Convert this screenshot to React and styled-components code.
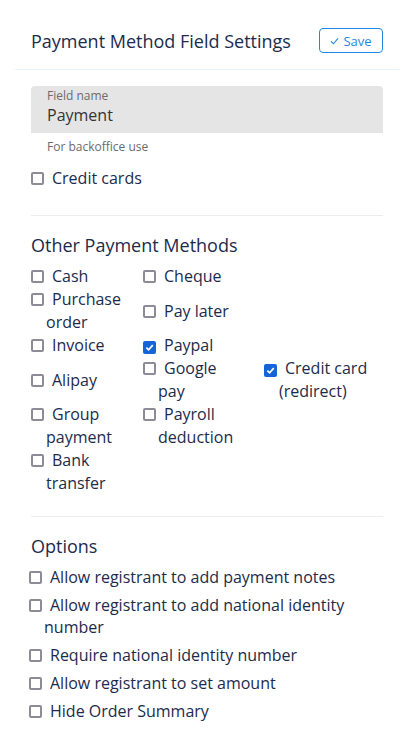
import React from 'react';
import styled, { createGlobalStyle } from 'styled-components';

const GlobalStyle = createGlobalStyle`
    body {
        margin: 0;
        background: #ffffff;
        font-family: "Open Sans", "Liberation Sans", sans-serif;
        color: #1c2b4b;
    }
`

const methods = [
    ['Cash', 'Cheque', null],
    ['Purchase order', 'Pay later', null],
    ['Invoice', 'Paypal', null],
    ['Alipay', 'Google pay', 'Credit card (redirect)'],
    ['Group payment', 'Payroll deduction', null],
    ['Bank transfer', null, null],
];

const checkedMethods = ['Paypal', 'Credit card (redirect)'];

const options = [
    'Allow registrant to add payment notes',
    'Allow registrant to add national identity number',
    'Require national identity number',
    'Allow registrant to set amount',
    'Hide Order Summary',
];

const Box = ({ checked }) => (
    <CheckBox checked={checked}>
        {checked && (
            <svg width="9" height="9" viewBox="0 0 10 10">
                <path d="M1.5 5.2 L4 7.6 L8.6 2.4" fill="none" stroke="#fff" strokeWidth="1.9" />
            </svg>
        )}
    </CheckBox>
);

const App = () => {
    return (
        <Panel>
            <GlobalStyle />
            <Header>
                <Title>Payment Method Field Settings</Title>
                <SaveButton>
                    <svg width="9" height="8" viewBox="0 0 10 9">
                        <path d="M1 5 L3.8 7.6 L9 1.5" fill="none" stroke="#1e88e5" strokeWidth="1.2" />
                    </svg>
                    Save
                </SaveButton>
            </Header>
            <Body>
                <FieldBox>
                    <FieldLabel>Field name</FieldLabel>
                    <FieldValue>Payment</FieldValue>
                </FieldBox>
                <Helper>For backoffice use</Helper>
                <CheckItem>
                    <Box />Credit cards
                </CheckItem>
                <Divider />
                <SectionTitle>Other Payment Methods</SectionTitle>
                <MethodGrid>
                    {methods.map((row, r) =>
                        row.map((name, c) =>
                            name ? (
                                <CheckItem key={r + '-' + c} $gutter={c < 2 ? 18 : 0}>
                                    <Box checked={checkedMethods.includes(name)} />{name}
                                </CheckItem>
                            ) : (
                                <span key={r + '-' + c} />
                            )
                        )
                    )}
                </MethodGrid>
                <Divider $top={21} />
                <SectionTitle>Options</SectionTitle>
                <OptionList>
                    {options.map((o) => (
                        <CheckItem key={o} $option>
                            <Box />{o}
                        </CheckItem>
                    ))}
                </OptionList>
            </Body>
        </Panel>
    );
};

export default App;

const Panel = styled.div`
    padding: 0 9px 0 15px;
`
const Header = styled.div`
    display: flex;
    align-items: center;
    justify-content: space-between;
    padding: 28px 16px 16px 16px;
    border-bottom: 1px solid #e6f3fc;
`
const Title = styled.h1`
    margin: 0;
    font-size: 18px;
    font-weight: 500;
    color: #1c2b4b;
`
const SaveButton = styled.button`
    display: flex;
    align-items: center;
    justify-content: center;
    gap: 4px;
    width: 64px;
    height: 25px;
    padding: 0;
    border: 1px solid #1e88e5;
    border-radius: 4px;
    background: #fff;
    color: #1e88e5;
    font-family: inherit;
    font-size: 13px;
`
const Body = styled.div`
    padding: 16px 16px 0 16px;
`
const FieldBox = styled.div`
    height: 47px;
    box-sizing: border-box;
    padding: 1px 16px 0 16px;
    background: #e5e5e5;
    border-radius: 4px 4px 0 0;
`
const FieldLabel = styled.div`
    font-size: 12px;
    line-height: 17px;
    color: #6b6b6b;
`
const FieldValue = styled.div`
    font-size: 16px;
    line-height: 22px;
    color: #333;
`
const Helper = styled.div`
    padding: 5px 16px 0 16px;
    font-size: 12px;
    line-height: 17px;
    color: #6b6b6b;
    margin-bottom: 12px;
`
const CheckItem = styled.label`
    display: block;
    padding-left: 15px;
    padding-right: ${(p) => p.$gutter || 0}px;
    text-indent: -15px;
    margin-left: ${(p) => (p.$option ? '-2px' : '0')};
    font-size: 16px;
    line-height: 23px;
    color: #1c2b4b;
`
const CheckBox = styled.span`
    display: inline-flex;
    align-items: center;
    justify-content: center;
    text-indent: 0;
    box-sizing: border-box;
    width: 13px;
    height: 13px;
    margin-right: 8px;
    vertical-align: -1px;
    border-radius: 2px;
    border: ${(p) => (p.checked ? 'none' : '2px solid #8c8b98')};
    background: ${(p) => (p.checked ? '#1565d8' : '#fff')};
`
const Divider = styled.div`
    height: 1px;
    background: #ececec;
    margin: ${(p) => p.$top || 25}px 0 17px 0;
`
const SectionTitle = styled.h2`
    margin: 0 0 8px 0;
    font-size: 18px;
    font-weight: 500;
    line-height: 24px;
    color: #1c2b4b;
`
const MethodGrid = styled.div`
    display: grid;
    grid-template-columns: 112px 121px 1fr;
    align-items: center;
`
const OptionList = styled.div`
    display: flex;
    flex-direction: column;
    gap: 6px;
    ${CheckItem} {
        line-height: 22px;
    }
`
